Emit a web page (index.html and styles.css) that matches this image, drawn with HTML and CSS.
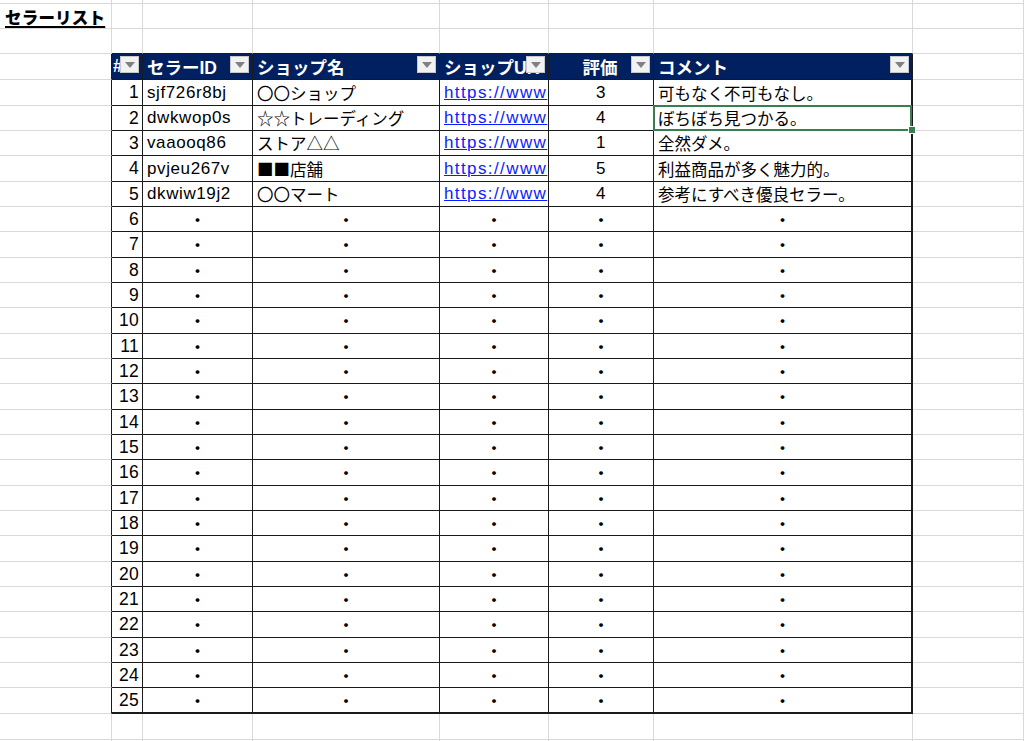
FILE: index.html
```html
<!DOCTYPE html>
<html lang="ja">
<head>
<meta charset="utf-8">
<title>セラーリスト</title>
<link rel="stylesheet" href="styles.css">
</head>
<body>
<div class="sheet">
  <div class="row r0"><div class="c ca"></div><div class="c cb"></div><div class="c cc"></div><div class="c cd"></div><div class="c ce"></div><div class="c cf"></div><div class="c cg"></div><div class="c ch"></div></div>
  <div class="row"><div class="c ca title"><span>セラーリスト</span></div><div class="c cb"></div><div class="c cc"></div><div class="c cd"></div><div class="c ce"></div><div class="c cf"></div><div class="c cg"></div><div class="c ch"></div></div>
  <div class="row"><div class="c ca"></div><div class="c cb et"></div><div class="c cc et"></div><div class="c cd et"></div><div class="c ce et"></div><div class="c cf et"></div><div class="c cg et"></div><div class="c ch"></div></div>

  <div class="row head"><div class="c ca el"></div>
    <div class="c cb t h"><span class="ht">#</span><span class="dd"></span></div>
    <div class="c cc t h"><span class="ht">セラーID</span><span class="dd"></span></div>
    <div class="c cd t h"><span class="ht">ショップ名</span><span class="dd"></span></div>
    <div class="c ce t h"><span class="ht">ショップUR</span><span class="dd"></span></div>
    <div class="c cf t h hc"><span class="ht">評価</span><span class="dd"></span></div>
    <div class="c cg t h"><span class="ht">コメント</span><span class="dd"></span></div>
    <div class="c ch"></div></div>

  <div class="row d"><div class="c ca el"></div><div class="c cb t num">1</div><div class="c cc t txt lat">sjf726r8bj</div><div class="c cd t txt jp">〇〇ショップ</div><div class="c ce t txt"><a href="#">https://www</a></div><div class="c cf t ctr lat">3</div><div class="c cg t txt jp">可もなく不可もなし。</div><div class="c ch"></div></div>
  <div class="row d"><div class="c ca el"></div><div class="c cb t num">2</div><div class="c cc t txt lat">dwkwop0s</div><div class="c cd t txt jp">☆☆トレーディング</div><div class="c ce t txt"><a href="#">https://www</a></div><div class="c cf t ctr lat">4</div><div class="c cg t txt jp sel">ぼちぼち見つかる。</div><div class="c ch"></div></div>
  <div class="row d"><div class="c ca el"></div><div class="c cb t num">3</div><div class="c cc t txt lat">vaaooq86</div><div class="c cd t txt jp">ストア△△</div><div class="c ce t txt"><a href="#">https://www</a></div><div class="c cf t ctr lat">1</div><div class="c cg t txt jp">全然ダメ。</div><div class="c ch"></div></div>
  <div class="row d"><div class="c ca el"></div><div class="c cb t num">4</div><div class="c cc t txt lat">pvjeu267v</div><div class="c cd t txt jp">■■店舗</div><div class="c ce t txt"><a href="#">https://www</a></div><div class="c cf t ctr lat">5</div><div class="c cg t txt jp">利益商品が多く魅力的。</div><div class="c ch"></div></div>
  <div class="row d"><div class="c ca el"></div><div class="c cb t num">5</div><div class="c cc t txt lat">dkwiw19j2</div><div class="c cd t txt jp">〇〇マート</div><div class="c ce t txt"><a href="#">https://www</a></div><div class="c cf t ctr lat">4</div><div class="c cg t txt jp">参考にすべき優良セラー。</div><div class="c ch"></div></div>
  <div class="row d"><div class="c ca el"></div><div class="c cb t num">6</div><div class="c cc t dot">・</div><div class="c cd t dot">・</div><div class="c ce t dot">・</div><div class="c cf t dot">・</div><div class="c cg t dot">・</div><div class="c ch"></div></div>
  <div class="row d"><div class="c ca el"></div><div class="c cb t num">7</div><div class="c cc t dot">・</div><div class="c cd t dot">・</div><div class="c ce t dot">・</div><div class="c cf t dot">・</div><div class="c cg t dot">・</div><div class="c ch"></div></div>
  <div class="row d"><div class="c ca el"></div><div class="c cb t num">8</div><div class="c cc t dot">・</div><div class="c cd t dot">・</div><div class="c ce t dot">・</div><div class="c cf t dot">・</div><div class="c cg t dot">・</div><div class="c ch"></div></div>
  <div class="row d"><div class="c ca el"></div><div class="c cb t num">9</div><div class="c cc t dot">・</div><div class="c cd t dot">・</div><div class="c ce t dot">・</div><div class="c cf t dot">・</div><div class="c cg t dot">・</div><div class="c ch"></div></div>
  <div class="row d"><div class="c ca el"></div><div class="c cb t num">10</div><div class="c cc t dot">・</div><div class="c cd t dot">・</div><div class="c ce t dot">・</div><div class="c cf t dot">・</div><div class="c cg t dot">・</div><div class="c ch"></div></div>
  <div class="row d"><div class="c ca el"></div><div class="c cb t num">11</div><div class="c cc t dot">・</div><div class="c cd t dot">・</div><div class="c ce t dot">・</div><div class="c cf t dot">・</div><div class="c cg t dot">・</div><div class="c ch"></div></div>
  <div class="row d"><div class="c ca el"></div><div class="c cb t num">12</div><div class="c cc t dot">・</div><div class="c cd t dot">・</div><div class="c ce t dot">・</div><div class="c cf t dot">・</div><div class="c cg t dot">・</div><div class="c ch"></div></div>
  <div class="row d"><div class="c ca el"></div><div class="c cb t num">13</div><div class="c cc t dot">・</div><div class="c cd t dot">・</div><div class="c ce t dot">・</div><div class="c cf t dot">・</div><div class="c cg t dot">・</div><div class="c ch"></div></div>
  <div class="row d"><div class="c ca el"></div><div class="c cb t num">14</div><div class="c cc t dot">・</div><div class="c cd t dot">・</div><div class="c ce t dot">・</div><div class="c cf t dot">・</div><div class="c cg t dot">・</div><div class="c ch"></div></div>
  <div class="row d"><div class="c ca el"></div><div class="c cb t num">15</div><div class="c cc t dot">・</div><div class="c cd t dot">・</div><div class="c ce t dot">・</div><div class="c cf t dot">・</div><div class="c cg t dot">・</div><div class="c ch"></div></div>
  <div class="row d"><div class="c ca el"></div><div class="c cb t num">16</div><div class="c cc t dot">・</div><div class="c cd t dot">・</div><div class="c ce t dot">・</div><div class="c cf t dot">・</div><div class="c cg t dot">・</div><div class="c ch"></div></div>
  <div class="row d"><div class="c ca el"></div><div class="c cb t num">17</div><div class="c cc t dot">・</div><div class="c cd t dot">・</div><div class="c ce t dot">・</div><div class="c cf t dot">・</div><div class="c cg t dot">・</div><div class="c ch"></div></div>
  <div class="row d"><div class="c ca el"></div><div class="c cb t num">18</div><div class="c cc t dot">・</div><div class="c cd t dot">・</div><div class="c ce t dot">・</div><div class="c cf t dot">・</div><div class="c cg t dot">・</div><div class="c ch"></div></div>
  <div class="row d"><div class="c ca el"></div><div class="c cb t num">19</div><div class="c cc t dot">・</div><div class="c cd t dot">・</div><div class="c ce t dot">・</div><div class="c cf t dot">・</div><div class="c cg t dot">・</div><div class="c ch"></div></div>
  <div class="row d"><div class="c ca el"></div><div class="c cb t num">20</div><div class="c cc t dot">・</div><div class="c cd t dot">・</div><div class="c ce t dot">・</div><div class="c cf t dot">・</div><div class="c cg t dot">・</div><div class="c ch"></div></div>
  <div class="row d"><div class="c ca el"></div><div class="c cb t num">21</div><div class="c cc t dot">・</div><div class="c cd t dot">・</div><div class="c ce t dot">・</div><div class="c cf t dot">・</div><div class="c cg t dot">・</div><div class="c ch"></div></div>
  <div class="row d"><div class="c ca el"></div><div class="c cb t num">22</div><div class="c cc t dot">・</div><div class="c cd t dot">・</div><div class="c ce t dot">・</div><div class="c cf t dot">・</div><div class="c cg t dot">・</div><div class="c ch"></div></div>
  <div class="row d"><div class="c ca el"></div><div class="c cb t num">23</div><div class="c cc t dot">・</div><div class="c cd t dot">・</div><div class="c ce t dot">・</div><div class="c cf t dot">・</div><div class="c cg t dot">・</div><div class="c ch"></div></div>
  <div class="row d"><div class="c ca el"></div><div class="c cb t num">24</div><div class="c cc t dot">・</div><div class="c cd t dot">・</div><div class="c ce t dot">・</div><div class="c cf t dot">・</div><div class="c cg t dot">・</div><div class="c ch"></div></div>
  <div class="row d last"><div class="c ca el"></div><div class="c cb t num">25</div><div class="c cc t dot">・</div><div class="c cd t dot">・</div><div class="c ce t dot">・</div><div class="c cf t dot">・</div><div class="c cg t dot">・</div><div class="c ch"></div></div>

  <div class="row tall"><div class="c ca"></div><div class="c cb"></div><div class="c cc"></div><div class="c cd"></div><div class="c ce"></div><div class="c cf"></div><div class="c cg"></div><div class="c ch"></div></div>
  <div class="row"><div class="c ca"></div><div class="c cb"></div><div class="c cc"></div><div class="c cd"></div><div class="c ce"></div><div class="c cf"></div><div class="c cg"></div><div class="c ch"></div></div>
</div>
</body>
</html>
```

FILE: styles.css
```css
html, body {
  margin: 0;
  padding: 0;
  background: #ffffff;
  overflow: hidden;
}

.sheet {
  width: 1024px;
  height: 741px;
  overflow: hidden;
  font-family: "Liberation Sans", "Noto Sans CJK JP", sans-serif;
  font-size: 16px;
  color: #000000;
}

.row {
  display: flex;
  height: 25px;
}

.r0 { height: 4px; }
.head { height: 26px; }
.tall { height: 26px; }
.d:nth-child(3n+2) { height: 26px; }

.c {
  flex: none;
  box-sizing: border-box;
  border-right: 1px solid #d9d9d9;
  border-bottom: 1px solid #d9d9d9;
  display: flex;
  align-items: center;
  overflow: hidden;
  white-space: nowrap;
  position: relative;
}

.ca { width: 112px; }
.cb { width: 31px; }
.cc { width: 110px; }
.cd { width: 187px; }
.ce { width: 109px; }
.cf { width: 105px; }
.cg { width: 259px; }
.ch { flex: 1 0 auto; width: 111px; }

.title {
  overflow: visible;
  padding-left: 5px;
  padding-top: 1px;
}
.title span {
  font-family: "Noto Sans CJK JP", sans-serif;
  font-weight: 900;
  text-decoration: underline;
  text-underline-offset: 2px;
  text-decoration-thickness: 2px;
  font-size: 16.5px;
  letter-spacing: 0.2px;
}

/* table edges */
.et { border-bottom-color: #1a1a1a; }
.el { border-right-color: #1a1a1a; }

.t {
  border-right-color: #1a1a1a;
  border-bottom-color: #1a1a1a;
}
.cg.t { border-right: 2px solid #1a1a1a; }
.last .t { border-bottom: 2px solid #1a1a1a; }

/* header */
.h {
  background: #002060;
  color: #ffffff;
  font-weight: bold;
  font-size: 17.5px;
  padding-left: 4px;
}
.h .ht { display: block; }
.hc { justify-content: center; padding-left: 0; padding-right: 2px; }
.cb.h { padding-left: 1px; }

.dd {
  position: absolute;
  right: 3px;
  top: 2px;
  width: 19px;
  height: 17px;
  box-sizing: border-box;
  background: #f2f2f2;
  border: 1px solid #c8c8c8;
  display: flex;
  align-items: center;
  justify-content: center;
}
.dd::before {
  content: "";
  width: 0;
  height: 0;
  border-left: 5px solid transparent;
  border-right: 5px solid transparent;
  border-top: 6px solid #808080;
}
.cg .dd { right: 2px; }

/* data */
.num {
  justify-content: flex-end;
  padding-right: 3px;
  font-size: 17.5px;
  letter-spacing: 0.3px;
}
.lat {
  font-size: 17px;
  letter-spacing: 0.6px;
}
.txt {
  padding-left: 4px;
}
.jp {
  font-family: "Noto Sans CJK JP", sans-serif;
  font-size: 16.5px;
  padding-left: 4px;
}
.ctr {
  justify-content: center;
}
.dot {
  justify-content: center;
  font-family: "Noto Sans CJK JP", sans-serif;
  font-weight: bold;
  font-size: 15px;
}
.txt a {
  color: #0b1cff;
  text-decoration: underline;
  font-size: 17px;
  letter-spacing: 1.4px;
}

.sel { overflow: visible; }
.sel::after {
  content: "";
  position: absolute;
  left: -1px;
  top: -1px;
  right: -1px;
  bottom: -1px;
  border: 2px solid #3a7d4e;
  pointer-events: none;
}
.sel::before {
  content: "";
  position: absolute;
  right: -5px;
  bottom: -4px;
  width: 6px;
  height: 6px;
  background: #3a7d4e;
  border: 1px solid #ffffff;
  z-index: 2;
}
```
